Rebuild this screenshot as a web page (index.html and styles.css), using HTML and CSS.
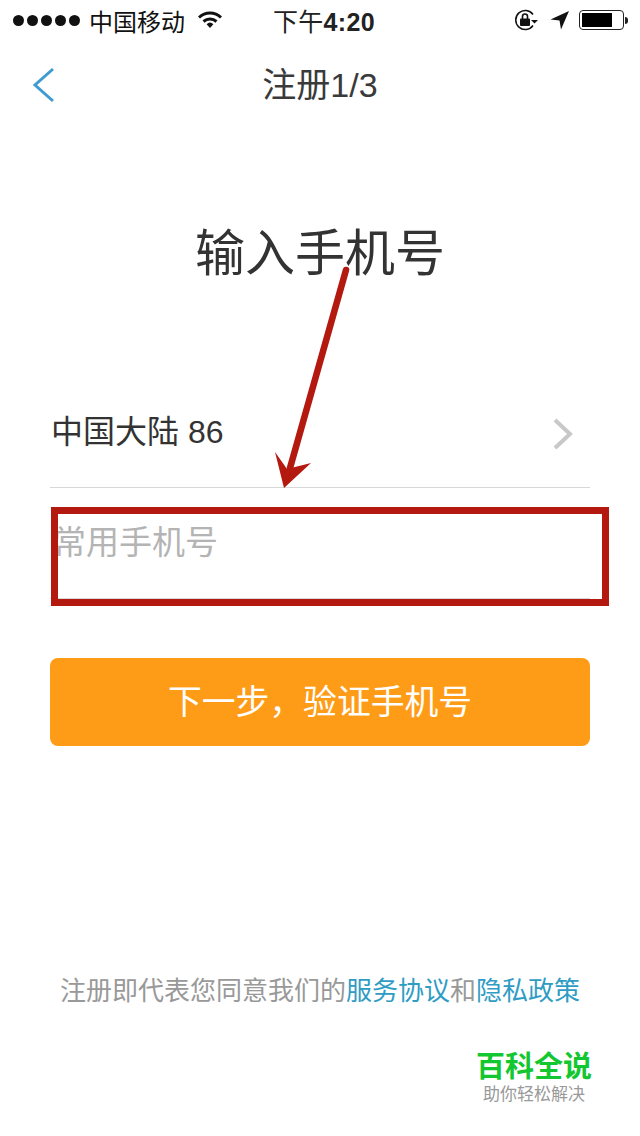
FILE: index.html
```html
<!DOCTYPE html>
<html>
<head>
    <title>注册</title>
    <link rel="stylesheet" href="styles.css">
</head>
<body>
    <div class="page">
        <!-- Status bar -->
        <div class="status">
            <div class="status-left">
                <div class="dots"><i></i><i></i><i></i><i></i><i></i></div>
                <span class="carrier">中国移动</span>
                <svg class="wifi" width="24" height="18" viewBox="0 0 24 18">
                    <path d="M1 6.5 A16 16 0 0 1 23 6.5" fill="none" stroke="#111" stroke-width="3"/>
                    <path d="M5.5 10.5 A10 10 0 0 1 18.5 10.5" fill="none" stroke="#111" stroke-width="3"/>
                    <path d="M8.6 13.2 A5 5 0 0 1 15.4 13.2 L12 17 Z" fill="#111"/>
                </svg>
            </div>
            <span class="time"><span class="time-cn">下午</span>4:20</span>
            <div class="status-right">
                <svg width="26" height="24" viewBox="0 0 26 24">
                    <path d="M20 6.5 A9.5 9.5 0 1 0 20 17.5" fill="none" stroke="#111" stroke-width="1.5"/>
                    <path d="M18 12 L25 12 L21.5 15.5 Z" fill="#111"/>
                    <rect x="7" y="10.5" width="10" height="7.5" rx="1" fill="#111"/>
                    <path d="M9.5 11 V8.5 A2.5 2.5 0 0 1 14.5 8.5 V11" fill="none" stroke="#111" stroke-width="1.6"/>
                </svg>
                <svg class="loc" width="20" height="20" viewBox="0 0 20 20">
                    <path d="M19 1 L0.5 9.5 L9.5 10.5 L11 19.5 Z" fill="#111"/>
                </svg>
                <div class="battery"><div class="battery-fill"></div></div>
                <div class="battery-tip"></div>
            </div>
        </div>

        <!-- Nav -->
        <div class="nav">
            <svg class="back" width="24" height="36" viewBox="0 0 24 36">
                <path d="M21 2 L3 18 L21 34" fill="none" stroke="#3f9bd0" stroke-width="3"/>
            </svg>
            <span class="nav-title">注册1/3</span>
        </div>

        <h1 class="heading">输入手机号</h1>

        <div class="form">
            <div class="row country">
                <span>中国大陆 86</span>
                <svg width="22" height="34" viewBox="0 0 22 34">
                    <path d="M3 3 L18 17 L3 31" fill="none" stroke="#c8c8c8" stroke-width="4"/>
                </svg>
            </div>
            <div class="row phone">常用手机号</div>
            <div class="next">下一步，验证手机号</div>
        </div>

        <p class="terms">注册即代表您同意我们的<span class="link">服务协议</span>和<span class="link">隐私政策</span></p>

        <div class="mark">
            <div class="mark-name">百科全说</div>
            <div class="mark-sub">助你轻松解决</div>
        </div>

        <!-- Annotation drawn on top of the screenshot -->
        <div class="red-box"></div>
        <svg class="arrow" width="640" height="1136" viewBox="0 0 640 1136">
            <path d="M346 270 L290 468" stroke="#b3190f" stroke-width="6.5" stroke-linecap="round" fill="none"/>
            <path d="M284 488 L275 452 L287 469 L311 463 Z" fill="#b3190f"/>
        </svg>
    </div>
</body>
</html>
```

FILE: styles.css
```css
* {
    box-sizing: border-box;
}

body {
    margin: 0;
    background: #fff;
    font-family: "Liberation Sans", "Noto Sans CJK SC", sans-serif;
    color: #333;
}

.page {
    position: relative;
    width: 640px;
    height: 1136px;
    overflow: hidden;
}

.status {
    display: flex;
    align-items: center;
    height: 40px;
    padding: 0 12px 0 13px;
    color: #111;
    font-size: 24px;
}

.status-left {
    display: flex;
    align-items: center;
    width: 260px;
}

.dots {
    display: flex;
    gap: 3px;
    margin-right: 9px;
}

.dots i {
    width: 11px;
    height: 11px;
    border-radius: 50%;
    background: #111;
}

.carrier {
    margin-right: 13px;
}

.time {
    font-weight: bold;
    font-size: 25px;
    letter-spacing: 0.3px;
    white-space: nowrap;
    color: #222;
}

.time-cn {
    font-weight: normal;
}

.status-right {
    display: flex;
    align-items: center;
    margin-left: auto;
}

.loc {
    margin: 0 9px 0 11px;
}

.battery {
    width: 45px;
    height: 20px;
    padding: 2px;
    border: 1px solid #222;
    border-radius: 4px;
}

.battery-fill {
    width: 30px;
    height: 100%;
    background: #000;
}

.battery-tip {
    width: 3px;
    height: 7px;
    margin-left: 1px;
    background: #222;
    border-radius: 0 3px 3px 0;
}

.nav {
    position: relative;
    display: flex;
    justify-content: center;
    align-items: center;
    height: 90px;
    padding-bottom: 6px;
}

.back {
    position: absolute;
    left: 32px;
    top: 27px;
}

.nav-title {
    font-size: 34px;
    color: #3a3a3a;
}

.heading {
    margin: 92px 0 0;
    font-size: 50px;
    line-height: 64px;
    font-weight: normal;
    text-align: center;
    color: #333;
}

.form {
    margin: 0 50px;
    padding-top: 115px;
}

.row {
    border-bottom: 1px solid #d8d8d8;
    font-size: 32px;
}

.country {
    display: flex;
    justify-content: space-between;
    align-items: center;
    height: 87px;
    padding: 0 16px 30px 0;
}

.country span {
    margin-left: 1px;
}

.country svg {
    margin-top: 10px;
}

.phone {
    height: 111px;
    padding: 33px 0 0 3px;
    line-height: 44px;
    font-size: 33px;
    color: #b4b4b4;
}

.next {
    margin-top: 59px;
    height: 88px;
    line-height: 88px;
    border-radius: 8px;
    background: #ff9c17;
    color: #fff;
    font-size: 33.8px;
    text-align: center;
}

.terms {
    margin: 228px 0 0;
    font-size: 26px;
    line-height: 34px;
    text-align: center;
    color: #999;
}

.link {
    color: #2f9cc4;
}

.mark {
    position: absolute;
    left: 462px;
    top: 1050px;
    width: 144px;
    text-align: center;
}

.mark-name {
    font-size: 29px;
    line-height: 34px;
    font-weight: bold;
    color: #12c72f;
}

.mark-sub {
    font-size: 17px;
    line-height: 22px;
    color: #999;
}

.red-box {
    position: absolute;
    left: 51px;
    top: 507px;
    width: 558px;
    height: 99px;
    border: 7px solid #b3190f;
}

.arrow {
    position: absolute;
    left: 0;
    top: 0;
}
```
